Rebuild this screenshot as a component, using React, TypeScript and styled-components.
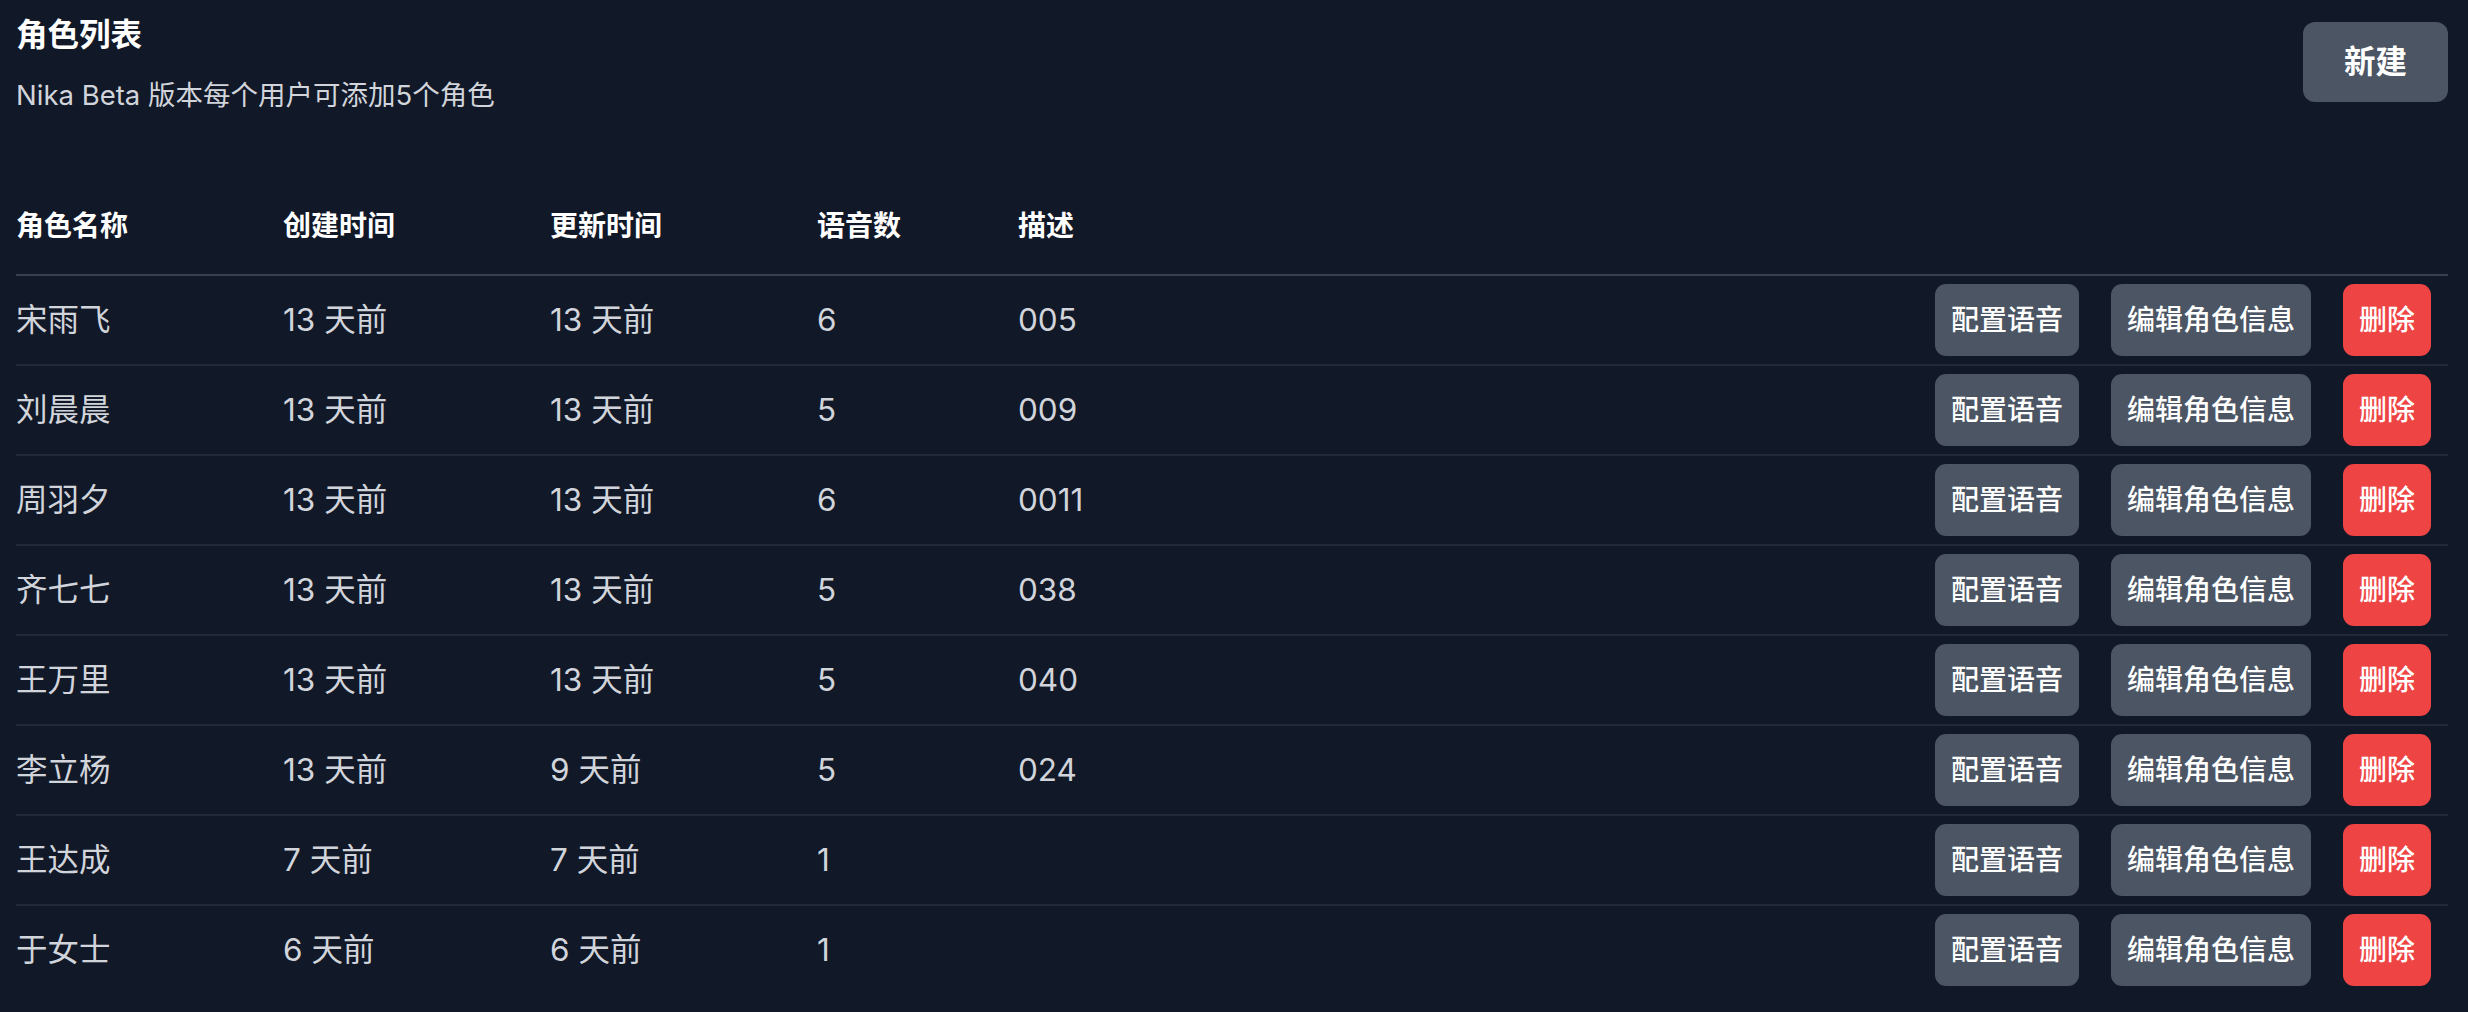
import React from "react";
import styled, { createGlobalStyle } from "styled-components";

const GlobalStyle = createGlobalStyle`
  html, body {
    margin: 0;
    padding: 0;
    background: #111827;
  }
  body {
    font-family: "Inter", "Noto Sans CJK SC", sans-serif;
    color: #f9fafb;
  }
  * { box-sizing: border-box; }
`;

const Page = styled.div`
  min-height: 1012px;
  background: #111827;
  padding: 14px 20px 0 16px;
`;

const TopBar = styled.div`
  display: flex;
  justify-content: space-between;
  align-items: flex-start;
`;

const TitleBlock = styled.div`
  display: flex;
  flex-direction: column;
  gap: 18px;
`;

const Title = styled.h1`
  margin: 0;
  font-size: 31.5px;
  line-height: 42px;
  font-weight: 700;
  color: #ffffff;
`;

const Subtitle = styled.p`
  margin: 0;
  font-size: 27.5px;
  line-height: 42px;
  font-weight: 400;
  color: #d1d5db;
`;

const NewButton = styled.button`
  margin-top: 8px;
  height: 80px;
  padding: 0 41px;
  border: none;
  border-radius: 12px;
  background: #4b5563;
  color: #ffffff;
  font-family: inherit;
  font-size: 31.5px;
  font-weight: 700;
  line-height: 42px;
  cursor: pointer;
`;

const Table = styled.div`
  margin-top: 62px;
  display: flex;
  flex-direction: column;
`;

const cols = "267px 267px 267px 201px 1fr auto";

const HeadRow = styled.div`
  display: grid;
  grid-template-columns: ${cols};
  align-items: center;
  padding: 27px 0;
  border-bottom: 2px solid #374151;
`;

const HeadCell = styled.div`
  font-size: 28px;
  line-height: 42px;
  font-weight: 700;
  color: #ffffff;
`;

const Row = styled.div<{ $last?: boolean }>`
  display: grid;
  grid-template-columns: ${cols};
  align-items: center;
  padding: 8px 0;
  border-bottom: 2px solid ${(p) => (p.$last ? "transparent" : "#1f2937")};
`;

const Cell = styled.div`
  font-size: 31.5px;
  line-height: 42px;
  font-weight: 400;
  color: #d1d5db;
  white-space: nowrap;
`;

const Actions = styled.div`
  display: flex;
  gap: 32px;
  padding-right: 17px;
`;

const ActionButton = styled.button<{ $danger?: boolean }>`
  height: 72px;
  padding: 0 16px;
  border: none;
  border-radius: 11px;
  background: ${(p) => (p.$danger ? "#ef4444" : "#4b5563")};
  color: #ffffff;
  font-family: inherit;
  font-size: 28px;
  line-height: 42px;
  font-weight: 500;
  cursor: pointer;
`;

type Role = {
  name: string;
  created: string;
  updated: string;
  voices: number;
  desc: string;
};

const roles: Role[] = [
  { name: "宋雨飞", created: "13 天前", updated: "13 天前", voices: 6, desc: "005" },
  { name: "刘晨晨", created: "13 天前", updated: "13 天前", voices: 5, desc: "009" },
  { name: "周羽夕", created: "13 天前", updated: "13 天前", voices: 6, desc: "0011" },
  { name: "齐七七", created: "13 天前", updated: "13 天前", voices: 5, desc: "038" },
  { name: "王万里", created: "13 天前", updated: "13 天前", voices: 5, desc: "040" },
  { name: "李立杨", created: "13 天前", updated: "9 天前", voices: 5, desc: "024" },
  { name: "王达成", created: "7 天前", updated: "7 天前", voices: 1, desc: "" },
  { name: "于女士", created: "6 天前", updated: "6 天前", voices: 1, desc: "" },
];

export default function App() {
  return (
    <>
      <GlobalStyle />
      <Page>
        <TopBar>
          <TitleBlock>
            <Title>角色列表</Title>
            <Subtitle>Nika Beta 版本每个用户可添加5个角色</Subtitle>
          </TitleBlock>
          <NewButton>新建</NewButton>
        </TopBar>
        <Table>
          <HeadRow>
            <HeadCell>角色名称</HeadCell>
            <HeadCell>创建时间</HeadCell>
            <HeadCell>更新时间</HeadCell>
            <HeadCell>语音数</HeadCell>
            <HeadCell>描述</HeadCell>
            <HeadCell />
          </HeadRow>
          {roles.map((r, i) => (
            <Row key={r.name} $last={i === roles.length - 1}>
              <Cell>{r.name}</Cell>
              <Cell>{r.created}</Cell>
              <Cell>{r.updated}</Cell>
              <Cell>{r.voices}</Cell>
              <Cell>{r.desc}</Cell>
              <Actions>
                <ActionButton>配置语音</ActionButton>
                <ActionButton>编辑角色信息</ActionButton>
                <ActionButton $danger>删除</ActionButton>
              </Actions>
            </Row>
          ))}
        </Table>
      </Page>
    </>
  );
}
